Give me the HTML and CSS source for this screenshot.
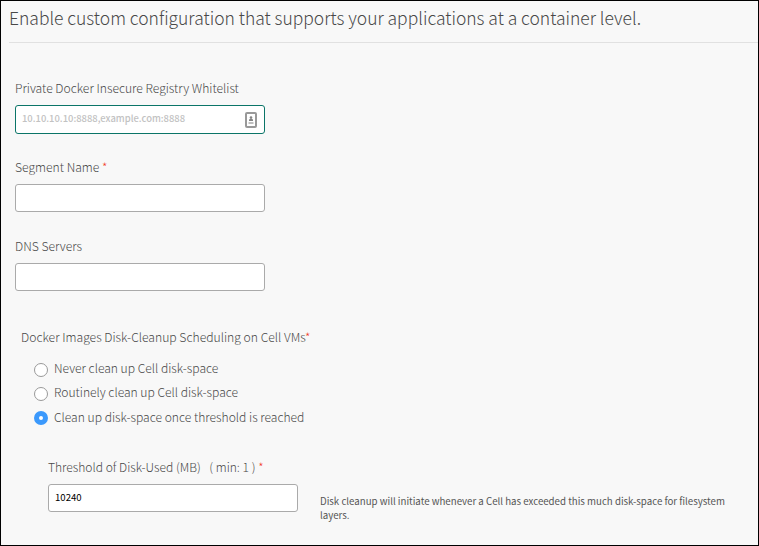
FILE: index.html
```html
<!DOCTYPE html>
<html lang="en">
<head>
<meta charset="utf-8">
<title>Container configuration</title>
<link rel="stylesheet" href="styles.css">
</head>
<body>
<main class="page">
  <h1 class="title">Enable custom configuration that supports your applications at a container level.</h1>
  <form class="form">
    <div class="field">
      <label class="label">Private Docker Insecure Registry Whitelist</label>
      <div class="input focused">
        <span class="placeholder">10.10.10.10:8888,example.com:8888</span>
        <svg class="card-icon" width="12" height="16" viewBox="0 0 12 16">
          <rect x="1" y="1" width="10" height="14" rx="1" fill="#fff" stroke="#999" stroke-width="2"/>
          <circle cx="6" cy="5.600" r="1.300" fill="#858585"/>
          <path d="M4 9V8q0-1.200 2-1.200T8 8v1z" fill="#858585"/>
          <path d="M3.500 11h5" stroke="#aaa" stroke-width="1.500"/>
        </svg>
      </div>
    </div>
    <div class="field">
      <label class="label">Segment Name <span class="req">*</span></label>
      <div class="input"></div>
    </div>
    <div class="field">
      <label class="label">DNS Servers</label>
      <div class="input"></div>
    </div>
    <div class="group">
      <div class="label group-label">Docker Images Disk-Cleanup Scheduling on Cell VMs<span class="req">*</span></div>
      <div class="options">
        <label class="option"><span class="radio"></span>Never clean up Cell disk-space</label>
        <label class="option"><span class="radio"></span>Routinely clean up Cell disk-space</label>
        <label class="option"><span class="radio checked"></span>Clean up disk-space once threshold is reached</label>
      </div>
      <div class="threshold">
        <div>
          <label class="label">Threshold of Disk-Used (MB)<span class="min">( min: 1 )</span> <span class="req">*</span></label>
          <div class="input"><span class="value">10240</span></div>
        </div>
        <p class="hint">Disk cleanup will initiate whenever a Cell has exceeded this much disk-space for filesystem layers.</p>
      </div>
    </div>
  </form>
</main>
</body>
</html>
```
FILE: styles.css
```css
* { box-sizing: border-box; }
body {
  margin: 0;
  font-family: "Noto Sans CJK SC", "Open Sans", sans-serif;
  font-weight: 300;
  color: #484848;
}
.page {
  width: 759px;
  height: 546px;
  overflow: hidden;
  border: 1px solid #000;
  background: #f8f8f8;
}
.title {
  margin: 0 0 0 8px;
  height: 42px;
  padding-top: 4px;
  border-bottom: 1px solid #e1e1e1;
  font-size: 17.48px;
  font-weight: 300;
  line-height: 26px;
  white-space: nowrap;
}
.form { padding: 34px 0 0 14px; }
.field { height: 79px; }
.label {
  display: block;
  height: 28px;
  font-size: 12.14px;
  line-height: 22px;
  white-space: nowrap;
}
.group-label { font-size: 12.17px; }
.req { color: #f0402c; }
.input {
  display: flex;
  align-items: center;
  width: 250px;
  height: 28px;
  padding: 0 7px 0 6px;
  border: 1px solid #aaa;
  border-radius: 3px;
  background: #fff;
}
.focused {
  height: 29px;
  justify-content: space-between;
  border-color: #0b7568;
}
.placeholder { margin-bottom: 3px; color: #c2c2c2; font-size: 9.43px; font-weight: 500; line-height: 14px; }
.value { margin-bottom: 2px; color: #000; font-size: 9.6px; font-weight: 400; line-height: 14px; }
.group { padding: 12px 0 0 6px; }
.options { padding: 2px 0 0 13px; }
.option {
  display: flex;
  align-items: center;
  height: 24px;
  font-size: 12.1px;
  line-height: 20px;
  white-space: nowrap;
}
.option:last-child { height: 25.5px; }
.radio {
  width: 14px;
  height: 14px;
  margin: 3px 6px 0 0;
  border: 1px solid #999;
  border-radius: 50%;
  background: #fff;
}
.checked { border: 5px solid #3b99fc; }
.threshold { display: flex; gap: 22px; padding: 26px 0 0 27px; }
.threshold .label { font-size: 12.05px; }
.min { margin-left: 8.5px; }
.hint {
  width: 415px;
  margin: 38px 0 0;
  color: #555;
  font-size: 9.7px;
  font-weight: 400;
  line-height: 14px;
}
```
